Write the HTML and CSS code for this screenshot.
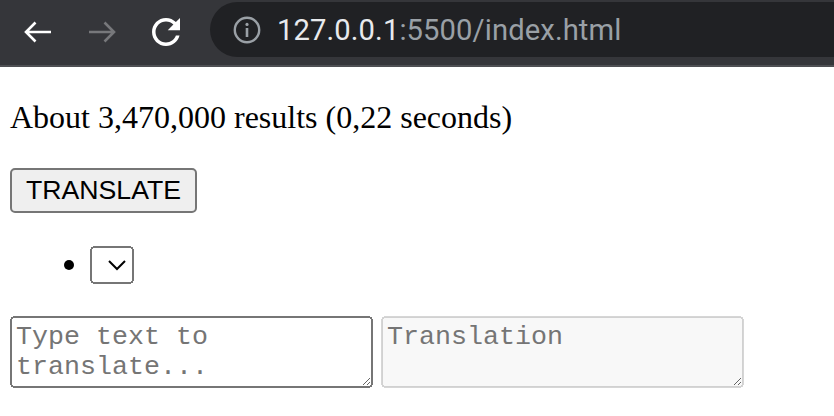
FILE: index.html
```html
<!DOCTYPE html>
<html lang="en">
<head>
<meta charset="utf-8">
<title>index</title>
<link rel="stylesheet" href="styles.css">
</head>
<body>
<header class="toolbar">
  <div class="nav">
    <svg class="nav-icon back" width="34" height="34" viewBox="0 0 34 34"><path d="M30 17H5M14.5 7.5L5 17l9.5 9.5" fill="none" stroke="#ffffff" stroke-width="2.6" stroke-linecap="butt" stroke-linejoin="miter"/></svg>
    <svg class="nav-icon fwd" width="34" height="34" viewBox="0 0 34 34"><path d="M4 17h25M19.5 7.5L29 17l-9.5 9.5" fill="none" stroke="#77787b" stroke-width="2.6" stroke-linecap="butt" stroke-linejoin="miter"/></svg>
    <svg class="nav-icon reload" width="42" height="42" viewBox="0 0 24 24"><path fill="#ffffff" d="M17.65 6.35C16.2 4.9 14.21 4 12 4c-4.42 0-7.99 3.58-7.99 8s3.57 8 7.99 8c3.73 0 6.840-2.55 7.730-6h-2.080c-.82 2.330-3.040 4-5.650 4-3.310 0-6-2.690-6-6s2.690-6 6-6c1.660 0 3.140.69 4.220 1.780L13 11h7V4l-2.350 2.350z"/></svg>
  </div>
  <div class="omnibox">
    <svg class="info" width="30" height="30" viewBox="0 0 30 30"><circle cx="15" cy="15" r="12.2" fill="none" stroke="#9aa0a6" stroke-width="2.4"/><rect x="13.7" y="13" width="2.6" height="9" fill="#9aa0a6"/><circle cx="15" cy="9.4" r="1.6" fill="#9aa0a6"/></svg>
    <span class="url"><span class="host">127.0.0.1</span><span class="rest">:5500/index.html</span></span>
  </div>
</header>
<main class="page">
  <p class="stats">About 3,470,000 results (0,22 seconds)</p>
  <div class="actions"><button class="translate-btn">TRANSLATE</button></div>
  <ul class="langs">
    <li><select class="lang-select"></select></li>
  </ul>
  <div class="boxes"><textarea class="box" placeholder="Type text to translate..."></textarea> <textarea class="box" placeholder="Translation" disabled></textarea></div>
</main>
</body>
</html>
```

FILE: styles.css
```css
html, body {
  margin: 0;
  padding: 0;
  background: #ffffff;
}

body {
  font-family: "Liberation Serif", serif;
  font-size: 16px;
  color: #000000;
  overflow: hidden;
}

.toolbar {
  height: 65px;
  background: #35363a;
  border-bottom: 2px solid #4e4f53;
  display: flex;
  align-items: flex-start;
}

.nav {
  display: flex;
  align-items: center;
  width: 210px;
  height: 60px;
}

.nav-icon {
  display: block;
  flex: none;
}

.back {
  margin-left: 21px;
  margin-top: 3px;
}

.fwd {
  margin-left: 30px;
  margin-top: 3px;
}

.reload {
  margin-left: 26px;
  margin-top: 4px;
}

.omnibox {
  flex: 1;
  margin-top: 2px;
  height: 55px;
  background: #202124;
  border-radius: 28px 0 0 28px;
  display: flex;
  align-items: center;
  padding-left: 22px;
}

.info {
  display: block;
  flex: none;
  margin-top: 1px;
}

.url {
  margin-left: 15px;
  font-family: Roboto, "Liberation Sans", sans-serif;
  font-size: 29.2px;
  letter-spacing: 0.1px;
  line-height: 1;
  margin-top: 3px;
}

.host {
  color: #e8eaed;
}

.rest {
  color: #9aa0a6;
}

.page {
  zoom: 2;
  padding: 0 5px;
}

.stats {
  margin: 16px 0;
}

.translate-btn {
  font-family: "Liberation Sans", Arial, sans-serif;
  font-size: 13.333px;
  padding: 1.5px 6px;
}

.langs {
  margin: 16px 0;
  padding-left: 40px;
}

.lang-select {
  font-family: "Liberation Sans", Arial, sans-serif;
  font-size: 13.333px;
}

.boxes {
  margin-top: 1px;
}

.box {
  font-family: "Liberation Mono", monospace;
  font-size: 13.333px;
  width: 175.5px;
  height: 30px;
  margin: 0;
}
```
